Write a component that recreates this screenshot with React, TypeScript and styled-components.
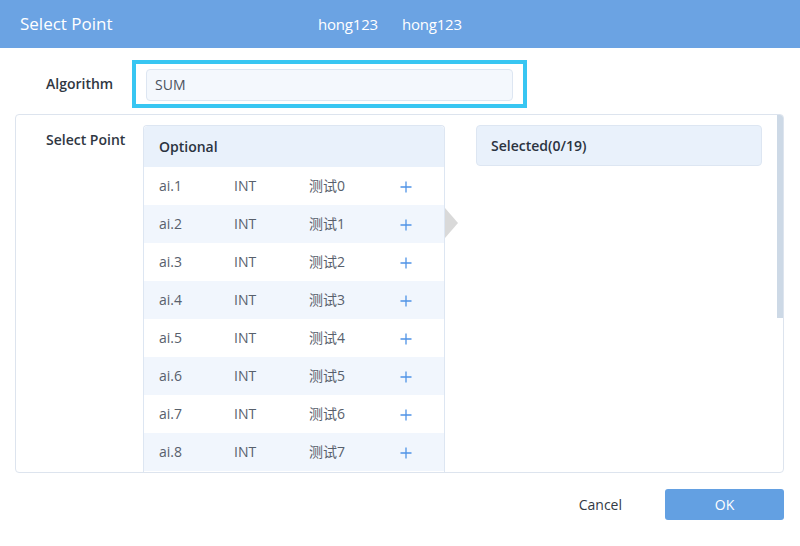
import React from "react";
import styled, { createGlobalStyle } from "styled-components";

const Global = createGlobalStyle`
  html, body { margin: 0; padding: 0; background: #ffffff; }
  body { font-family: "Open Sans", "Noto Sans CJK SC", sans-serif; }
  * { box-sizing: border-box; }
`;

const Dialog = styled.div`
  width: 800px;
  height: 546px;
  background: #ffffff;
  display: flex;
  flex-direction: column;
  overflow: hidden;
`;

const Header = styled.div`
  height: 48px;
  flex: none;
  background: #6ba3e3;
  color: #ffffff;
  display: flex;
  align-items: center;
  padding-left: 20px;
`;

const Title = styled.div`
  width: 298px;
  flex: none;
  font-size: 17px;
  line-height: 24px;
`;

const HeaderTags = styled.div`
  display: flex;
  gap: 24px;
`;

const HeaderTag = styled.div`
  font-size: 15px;
  line-height: 20px;
  letter-spacing: -0.2px;
`;

const Body = styled.div`
  padding: 12px 16px 0 15px;
  display: flex;
  flex-direction: column;
`;

const FormRow = styled.div`
  display: flex;
  align-items: center;
  padding-left: 31px;
`;

const Label = styled.div<{ $w: number }>`
  width: ${(p) => p.$w}px;
  flex: none;
  font-size: 14px;
  font-weight: 600;
  color: #2f3742;
  line-height: 20px;
`;

const Highlight = styled.div`
  width: 395px;
  height: 48px;
  border: 4px solid #38c6f2;
  padding: 5px 10px;
`;

const Input = styled.div`
  height: 32px;
  border: 1px solid #dde6f2;
  border-radius: 4px;
  background: #f4f8fd;
  color: #4a525e;
  font-size: 14px;
  line-height: 30px;
  padding-left: 8px;
`;

const Panel = styled.div`
  margin-top: 6px;
  height: 359px;
  border: 1px solid #dde4ee;
  border-radius: 4px;
  position: relative;
  overflow: hidden;
  display: flex;
  align-items: stretch;
  padding: 10px 0 0 30px;
`;

const PanelLabel = styled(Label)`
  padding-top: 5px;
`;

const ListBox = styled.div`
  width: 302px;
  flex: none;
  border: 1px solid #dde6f2;
  border-bottom: none;
  border-radius: 4px 4px 0 0;
  background: #ffffff;
`;

const ListHead = styled.div`
  height: 41px;
  background: #e9f1fb;
  border-radius: 4px 4px 0 0;
  display: flex;
  align-items: center;
  padding-left: 15px;
  font-size: 14px;
  font-weight: 600;
  color: #2b3340;
`;

const Row = styled.div<{ $alt: boolean }>`
  height: 38px;
  display: grid;
  grid-template-columns: 75px 75px 91px 1fr;
  align-items: center;
  padding-left: 15px;
  background: ${(p) => (p.$alt ? "#f1f6fd" : "#ffffff")};
  color: #58606c;
  font-size: 14px;
`;

const Cell = styled.span`
  line-height: 20px;
`;

const Plus = styled.span`
  display: flex;
  align-items: center;
  padding-top: 2px;
`;

const Arrow = styled.div`
  width: 31px;
  flex: none;
  position: relative;
`;

const ArrowTip = styled.div`
  position: absolute;
  left: 0;
  top: 83px;
  width: 0;
  height: 0;
  border-top: 15px solid transparent;
  border-bottom: 15px solid transparent;
  border-left: 13px solid #d9d9d9;
`;

const SelectedHead = styled.div`
  width: 286px;
  height: 41px;
  flex: none;
  align-self: flex-start;
  background: #e9f1fb;
  border: 1px solid #dde6f2;
  border-radius: 4px;
  display: flex;
  align-items: center;
  padding-left: 14px;
  font-size: 14px;
  font-weight: 600;
  color: #2b3340;
`;

const ScrollThumb = styled.div`
  position: absolute;
  right: 0;
  top: 0;
  width: 6px;
  height: 203px;
  background: #cdd9e6;
`;

const Footer = styled.div`
  display: flex;
  justify-content: flex-end;
  align-items: center;
  gap: 43px;
  padding: 16px 0 0 0;
`;

const CancelBtn = styled.div`
  font-size: 14px;
  color: #333a44;
  line-height: 20px;
`;

const OkBtn = styled.div`
  width: 119px;
  height: 31px;
  background: #63a0e2;
  border-radius: 3px;
  color: #ffffff;
  font-size: 14px;
  display: flex;
  align-items: center;
  justify-content: center;
`;

const PlusIcon = () => (
  <svg width="12" height="12" viewBox="0 0 12 12">
    <path d="M6 0.5V11.5M0.5 6H11.5" stroke="#4f93e6" strokeWidth="1.3" />
  </svg>
);

const rows = Array.from({ length: 8 }, (_, i) => ({
  id: `ai.${i + 1}`,
  type: "INT",
  name: `测试${i}`,
}));

export default function App() {
  return (
    <>
      <Global />
      <Dialog>
        <Header>
          <Title>Select Point</Title>
          <HeaderTags>
            <HeaderTag>hong123</HeaderTag>
            <HeaderTag>hong123</HeaderTag>
          </HeaderTags>
        </Header>
        <Body>
          <FormRow>
            <Label $w={86}>Algorithm</Label>
            <Highlight>
              <Input>SUM</Input>
            </Highlight>
          </FormRow>
          <Panel>
            <PanelLabel $w={97}>Select Point</PanelLabel>
            <ListBox>
              <ListHead>Optional</ListHead>
              {rows.map((r, i) => (
                <Row key={r.id} $alt={i % 2 === 1}>
                  <Cell>{r.id}</Cell>
                  <Cell>{r.type}</Cell>
                  <Cell>{r.name}</Cell>
                  <Plus>
                    <PlusIcon />
                  </Plus>
                </Row>
              ))}
            </ListBox>
            <Arrow>
              <ArrowTip />
            </Arrow>
            <SelectedHead>Selected(0/19)</SelectedHead>
            <ScrollThumb />
          </Panel>
          <Footer>
            <CancelBtn>Cancel</CancelBtn>
            <OkBtn>OK</OkBtn>
          </Footer>
        </Body>
      </Dialog>
    </>
  );
}
